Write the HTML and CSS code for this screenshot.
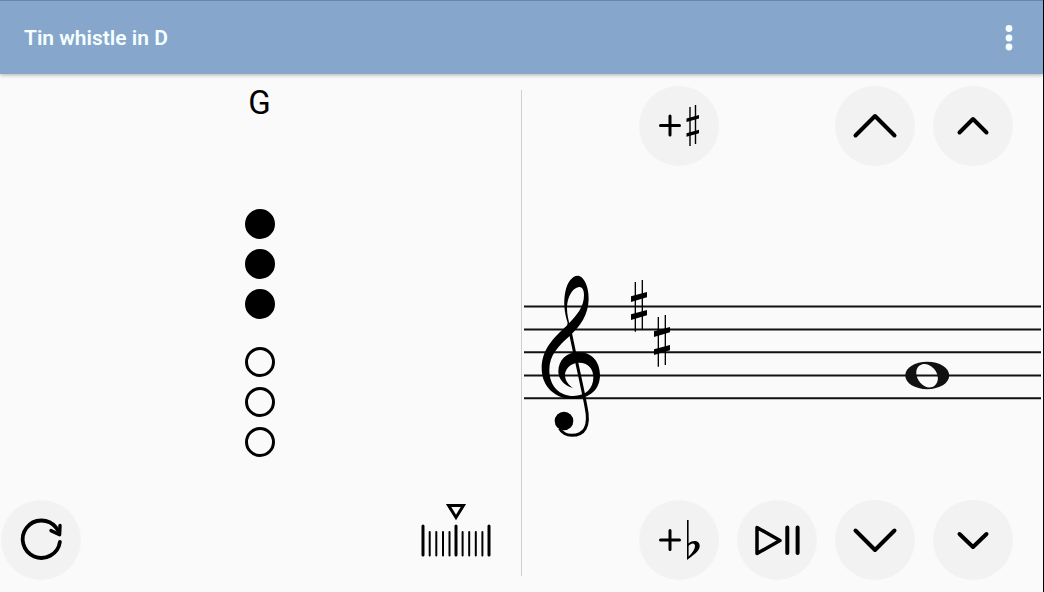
FILE: index.html
```html
<!DOCTYPE html>
<html lang="en">
<head>
    <meta charset="UTF-8">
    <meta name="viewport" content="width=device-width, initial-scale=1.0">
    <title>Tin whistle in D</title>
    <link rel="stylesheet" href="styles.css">
</head>
<body>
    <header class="app-bar">
        <h1>Tin whistle in D</h1>
        <button class="menu-button" aria-label="More options">
            <svg width="24" height="32" viewBox="0 0 24 32"><circle cx="12" cy="6.5" r="3.4"/><circle cx="12" cy="16" r="3.4"/><circle cx="12" cy="25" r="3.4"/></svg>
        </button>
    </header>

    <main class="content">
        <section class="pane fingering">
            <h2 class="note-name">G</h2>
            <div class="holes">
                <div class="hand">
                    <span class="hole closed"></span>
                    <span class="hole closed"></span>
                    <span class="hole closed"></span>
                </div>
                <div class="hand">
                    <span class="hole"></span>
                    <span class="hole"></span>
                    <span class="hole"></span>
                </div>
            </div>
            <div class="tools">
                <button class="round" aria-label="Reset">
                    <svg class="icon" viewBox="0 0 80 80" stroke-width="3.8">
                        <path d="M58.9 42A18.7 18.7 0 1 1 55 27.5L58 32"/>
                        <path stroke-width="3.4" d="M59 25.5L58.6 34.8L50 30.6"/>
                    </svg>
                </button>
                <button class="round plain" aria-label="Tuner">
                    <svg class="icon" viewBox="0 0 80 80">
                        <path stroke-width="3" stroke-linejoin="miter" class="pointer" d="M32.6 5.5H47.4L40 17.5Z"/>
                        <path stroke-width="3" d="M7 26V55M40 26V55M73 26V55"/>
                        <path stroke-width="2" d="M13.7 32V55.5M20.3 32V55.5M27 32V55.5M33.5 32V55.5M46.6 32V55.5M53.2 32V55.5M59.8 32V55.5M66.4 32V55.5"/>
                    </svg>
                </button>
            </div>
        </section>

        <div class="divider"></div>

        <section class="pane notation">
            <div class="controls">
                <button class="round" aria-label="Add sharp">
                    <svg class="icon" viewBox="0 0 80 80">
                        <path stroke-width="3" d="M21.5 39.5H40.5M31 30V49"/>
                        <path class="thin" d="M51 21V60M56.5 19V58"/>
                        <path class="solid" d="M47.5 32.5L60 29V32.5L47.5 36ZM47.5 47.2L60 43.7V47.2L47.5 50.7Z"/>
                    </svg>
                </button>
                <button class="round octave-up" aria-label="Large step up">
                    <svg class="icon" viewBox="0 0 80 80" stroke-width="4"><path d="M20.5 49.5L40 30L59.5 49.5"/></svg>
                </button>
                <button class="round" aria-label="Step up">
                    <svg class="icon" viewBox="0 0 80 80" stroke-width="4"><path d="M26.5 46.5L40 33L53.5 46.5"/></svg>
                </button>
            </div>

            <div class="staff">
                <svg class="staff-drawing" role="img" aria-label="Treble clef, two sharps, note G">
                    <defs>
                        <g id="sharp-sign">
                            <path fill="none" stroke="#000" stroke-width="4" d="M346 66V215M367 60V210"/>
                            <path d="M333 109L381 96V112L333 126ZM333 163L381 150V166L333 180Z"/>
                        </g>
                    </defs>
                    <g stroke="#111" stroke-width="2">
                        <line x1="0" x2="100%" y1="34.4" y2="34.4"/>
                        <line x1="0" x2="100%" y1="57.6" y2="57.6"/>
                        <line x1="0" x2="100%" y1="80.2" y2="80.2"/>
                        <line x1="0" x2="100%" y1="103.4" y2="103.4"/>
                        <line x1="0" x2="100%" y1="126.2" y2="126.2"/>
                    </g>
                    <g transform="translate(-4 -12) scale(.3333)">
                        <path d="M144 192C132 155 130 125 136 95C142 65 158 47 173 47C190 47 207 78 206 118C205 165 180 200 150 227C115 258 88 285 88 330C88 380 120 408 160 408C198 408 220 385 220 352C220 325 203 308 178 308C150 308 134 328 135 348C137 365 147 376 159 384C132 376 116 358 115 335C115 300 140 276 175 276C215 276 240 305 240 345C240 390 208 417 158 417C105 417 65 380 65 325C65 265 105 230 140 197C172 165 192 140 192 105C192 88 186 80 177 81C158 84 141 110 141 145C141 165 146 180 149 196Z"/>
                        <path fill="none" stroke="#000" stroke-width="9" d="M146 190C155 245 181 350 198 440C211 500 193 526 155 526C140 526 125 518 119 505"/>
                        <circle cx="132" cy="483" r="28"/>
                        <use href="#sharp-sign"/>
                        <use href="#sharp-sign" x="69" y="105"/>
                    </g>
                    <!-- whole note sits at a share of the staff width -->
                    <svg x="78%" y="103.5" overflow="visible">
                        <g fill="#111" transform="scale(.3333)">
                            <path fill-rule="evenodd" d="M-66 0C-66 -23 -37 -41 0 -41C37 -41 66 -23 66 0C66 23 37 41 0 41C-37 41 -66 23 -66 0ZM-23 -30C-38 -19 -35 5 -21 22C-8 37 11 40 22 31C37 19 34 -5 20 -20C7 -35 -12 -39 -23 -30Z"/>
                        </g>
                    </svg>
                </svg>
            </div>

            <div class="controls">
                <button class="round" aria-label="Add flat">
                    <svg class="icon" viewBox="0 0 80 80">
                        <path stroke-width="3" d="M21.5 40H40.5M31 30.5V49.5"/>
                        <path class="solid" d="M48 20H49.6V43.5C54 39.5 60.7 40.5 60.7 46C60.7 51.5 54 55 48 60ZM49.6 46V56.5C53.5 53 56 49 56 46C56 42.5 52 42.5 49.6 46Z" fill-rule="evenodd"/>
                    </svg>
                </button>
                <button class="round" aria-label="Play or pause">
                    <svg class="icon" viewBox="0 0 80 80">
                        <path stroke-width="3.5" d="M20 27.5V53.5L43 40.5Z"/>
                        <path stroke-width="4" d="M50.3 27.5V53M60.6 27.5V53"/>
                    </svg>
                </button>
                <button class="round" aria-label="Large step down">
                    <svg class="icon" viewBox="0 0 80 80" stroke-width="4"><path d="M20.5 30.5L40 50L59.5 30.5"/></svg>
                </button>
                <button class="round" aria-label="Step down">
                    <svg class="icon" viewBox="0 0 80 80" stroke-width="4"><path d="M26.5 34L40 47L53.5 34"/></svg>
                </button>
            </div>
        </section>
    </main>
</body>
</html>
```
FILE: styles.css
```css
:root {
    --bar: #86a6cb;
    --bar-edge: #6885a8;
    --page: #fafafa;
    --round: #f2f2f2;
    --ink: #000000;
}

* {
    box-sizing: border-box;
}

body {
    margin: 0;
    min-height: 100vh;
    display: flex;
    flex-direction: column;
    background: var(--page);
    color: var(--ink);
    border-right: 1px solid #000;
    font-family: Roboto, sans-serif;
}

button {
    padding: 0;
    border: none;
    background: none;
    cursor: pointer;
}

.app-bar {
    display: flex;
    align-items: center;
    justify-content: space-between;
    height: 74px;
    padding: 0 22px 0 24px;
    background: var(--bar);
    border-top: 1px solid var(--bar-edge);
    box-shadow: 0 1px 4px rgba(0, 0, 0, 0.3);
}

.app-bar h1 {
    margin: 0;
    font-size: 21px;
    font-weight: 600;
    color: #f6ffff;
}

.menu-button {
    display: flex;
    fill: #f6ffff;
}

.content {
    flex: 1;
    display: grid;
    grid-template-columns: 1fr 1px 1fr;
}

.pane {
    display: flex;
    flex-direction: column;
    padding: 12px 0;
}

.divider {
    margin: 16px 0;
    background: #cfcfcf;
}

/* fingering chart */
.note-name {
    height: 80px;
    margin: 0;
    font-size: 33px;
    font-weight: 400;
    line-height: 34px;
    text-align: center;
}

.holes {
    flex: 1;
    display: flex;
    flex-direction: column;
    align-items: center;
    justify-content: center;
    gap: 28px;
}

.note-name,
.holes {
    padding-right: 2px;
}

.hand {
    display: flex;
    flex-direction: column;
    gap: 10px;
}

.hole {
    width: 30px;
    height: 30px;
    border: 3px solid var(--ink);
    border-radius: 50%;
}

.hole.closed {
    background: var(--ink);
}

.tools {
    display: flex;
    justify-content: space-between;
    padding: 0 25px 0 1px;
}

.round {
    width: 80px;
    height: 80px;
    border-radius: 50%;
    background: var(--round);
}

.round.plain {
    background: none;
}

.icon {
    display: block;
    width: 80px;
    height: 80px;
    fill: none;
    stroke: var(--ink);
    stroke-linecap: round;
    stroke-linejoin: round;
}

.icon .pointer {
    stroke-linejoin: miter;
}

.icon .thin {
    stroke-width: 1.4px;
    stroke-linecap: butt;
}

.icon .solid {
    fill: var(--ink);
    stroke: none;
}

/* staff and note controls */
.controls {
    display: grid;
    grid-template-columns: repeat(4, 80px);
    gap: 18px;
    justify-content: end;
    padding-right: 30px;
}

.octave-up {
    grid-column: 3;
}

.staff {
    flex: 1;
    display: flex;
    align-items: center;
    padding: 48px 2px 0;
}

.staff-drawing {
    width: 100%;
    height: 170px;
}
```
